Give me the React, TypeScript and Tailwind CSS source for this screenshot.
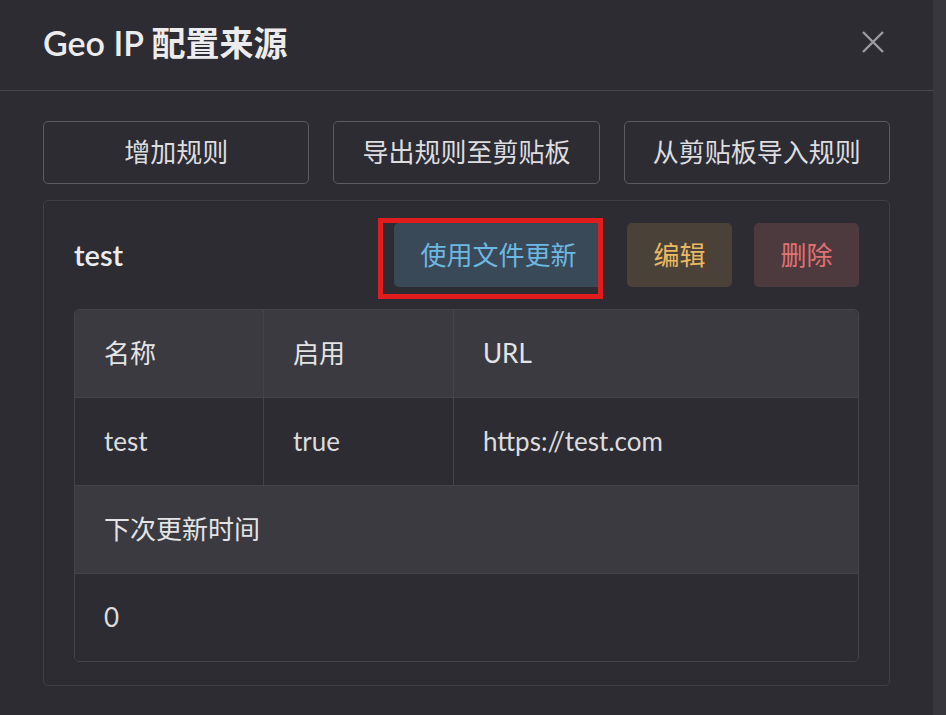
import React from "react";

const font = { fontFamily: '"Lato", "Noto Sans CJK SC", sans-serif' };

function HeaderCell({ children, className = "" }: { children: React.ReactNode; className?: string }) {
  return (
    <div className={`flex h-[87px] items-center bg-[#3b3a40] pl-[29px] text-[26px] text-[#e4e4e6] ${className}`}>
      {children}
    </div>
  );
}

function BodyCell({ children, className = "" }: { children: React.ReactNode; className?: string }) {
  return (
    <div className={`flex h-[87px] items-center bg-[#2d2c32] pl-[29px] text-[26px] text-[#dcdcde] ${className}`}>
      {children}
    </div>
  );
}

export default function App() {
  return (
    <div className="flex h-[715px] w-[946px] overflow-hidden bg-[#2d2c32]" style={font}>
      {/* Dialog */}
      <div className="flex w-[933px] flex-col">
        <div className="flex h-[91px] items-center justify-between border-b border-[#48474d] pb-[6px] pl-[43px] pr-[48px]">
          <h1 className="text-[34px] font-semibold text-[#ececee]">Geo IP 配置来源</h1>
          <svg width="24" height="24" viewBox="0 0 24 24" className="text-[#9c9ba0]">
            <path d="M2 2 L22 22 M22 2 L2 22" stroke="currentColor" strokeWidth="2.4" />
          </svg>
        </div>

        <div className="flex flex-col gap-4 px-[43px] pt-[30px]">
          <div className="flex gap-6">
            {["增加规则", "导出规则至剪贴板", "从剪贴板导入规则"].map((t) => (
              <button
                key={t}
                className="flex h-[63px] w-[267px] items-center justify-center rounded-[5px] border border-[#5c5b61] text-[26px] text-[#dddde0]"
              >
                {t}
              </button>
            ))}
          </div>

          {/* Card */}
          <div className="rounded-[5px] border border-[#403f45] px-[30px] pb-[23px] pt-[22px]">
            <div className="flex h-[64px] items-center">
              <span className="flex-1 text-[29px] font-semibold text-[#ececee]">test</span>
              <div className="relative mr-[24px]">
                <button className="flex h-[64px] w-[209px] items-center justify-center rounded-[5px] bg-[#3a4957] text-[26px] text-[#6cb8e2]">
                  使用文件更新
                </button>
                <div className="pointer-events-none absolute left-[-16px] top-[-5px] h-[81px] w-[225px] border-[5px] border-[#e01c1c]" />
              </div>
              <button className="mr-[22px] flex h-[64px] w-[105px] items-center justify-center rounded-[5px] bg-[#4a4239] text-[26px] text-[#e9b862]">
                编辑
              </button>
              <button className="flex h-[64px] w-[105px] items-center justify-center rounded-[5px] bg-[#4d3a3f] text-[26px] text-[#e07272]">
                删除
              </button>
            </div>

            {/* Table */}
            <div className="mt-[22px] overflow-hidden rounded-[5px] border border-[#45444a]">
              <div className="grid grid-cols-[189px_190px_1fr] border-b border-[#45444a]">
                <HeaderCell className="border-r border-[#45444a]">名称</HeaderCell>
                <HeaderCell className="border-r border-[#45444a]">启用</HeaderCell>
                <HeaderCell>URL</HeaderCell>
              </div>
              <div className="grid grid-cols-[189px_190px_1fr] border-b border-[#45444a]">
                <BodyCell className="border-r border-[#45444a]">test</BodyCell>
                <BodyCell className="border-r border-[#45444a]">true</BodyCell>
                <BodyCell>https://test.com</BodyCell>
              </div>
              <div className="border-b border-[#45444a]">
                <HeaderCell>下次更新时间</HeaderCell>
              </div>
              <BodyCell>0</BodyCell>
            </div>
          </div>
        </div>
      </div>
      {/* Scrollbar strip */}
      <div className="w-[13px] bg-[#38373b]" />
    </div>
  );
}
